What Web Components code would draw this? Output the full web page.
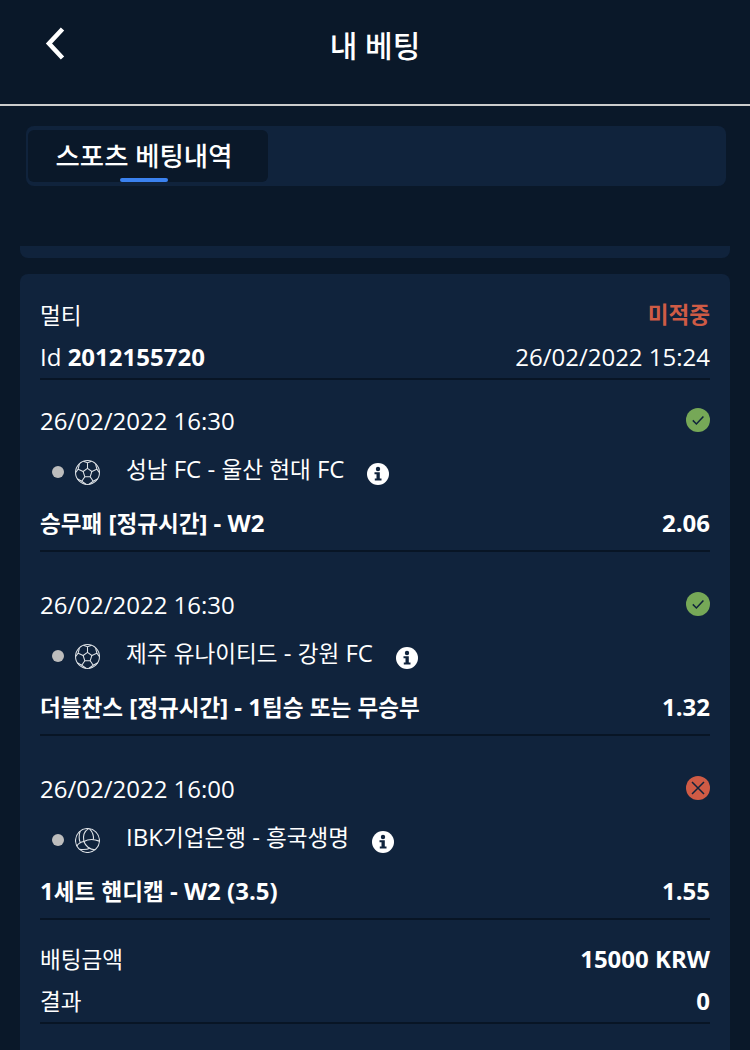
<!DOCTYPE html>
<html lang="ko">
<head>
<meta charset="utf-8">
<title>내 베팅</title>
<style>
  html, body { margin: 0; height: 100%; background: #0a1829; overflow: hidden; }
  body { font-family: "Open Sans", "Noto Sans CJK KR", sans-serif; color: #fff; font-size: 24px; }
</style>
</head>
<body>
<app-header>내 베팅</app-header>
<bet-tabs>스포츠 베팅내역</bet-tabs>
<div style="height:60px"></div>
<prev-card></prev-card>
<bet-card>
  <bet-event date="26/02/2022 16:30" status="win" sport="soccer" teams="성남 FC - 울산 현대 FC" market="승무패 [정규시간] - W2" odds="2.06"></bet-event>
  <bet-event date="26/02/2022 16:30" status="win" sport="soccer" teams="제주 유나이티드 - 강원 FC" market="더블찬스 [정규시간] - 1팀승 또는 무승부" odds="1.32"></bet-event>
  <bet-event date="26/02/2022 16:00" status="lose" sport="volley" teams="IBK기업은행 - 흥국생명" market="1세트 핸디캡 - W2 (3.5)" odds="1.55"></bet-event>
</bet-card>

<script>
// hangul runs are set smaller than the latin text, like in the app
const ko = s => s.replace(/[가-힣]+/g, m => `<span style="font-size:.94em">${m}</span>`);

// Header
class AppHeader extends HTMLElement {
  constructor() {
    super();
    this.attachShadow({ mode: 'open' });
    this.shadowRoot.innerHTML = `
      <style>
        :host { display: flex; justify-content: center; position: relative; height: 104px; border-bottom: 2px solid #ccc; }
        .title { font-size: 30px; font-weight: 500; line-height: 40px; padding-top: 26px; }
        svg { position: absolute; left: 44px; top: 27px; }
      </style>
      <svg width="22" height="33" viewBox="0 0 22 33" fill="none"><path d="M18.5 2 L5 16.5 L18.5 31" stroke="#fff" stroke-width="4.6"/></svg>
      <div class="title"><slot></slot></div>`;
  }
}

// Tabs
class BetTabs extends HTMLElement {
  constructor() {
    super();
    this.attachShadow({ mode: 'open' });
    this.shadowRoot.innerHTML = `
      <style>
        :host { display: block; margin: 20px 24px 0 26px; height: 60px; background: #10233c; border-radius: 8px; padding: 4px 2px; box-sizing: border-box; }
        .tab { position: relative; width: 240px; height: 52px; background: #0a1829; border-radius: 6px; text-align: center; font-size: 26.4px; font-weight: 500; line-height: 52px; padding-right: 8px; box-sizing: border-box; }
        .tab::after { content: ''; position: absolute; left: 92px; bottom: 0; width: 48px; height: 4px; background: #3b82f0; border-radius: 2px; }
      </style>
      <div class="tab"><slot></slot></div>`;
  }
}

// Sliver of the card above
class PrevCard extends HTMLElement {
  constructor() {
    super();
    this.attachShadow({ mode: 'open' });
    this.shadowRoot.innerHTML = `
      <style>
        :host { display: block; margin: 0 20px; height: 12px; background: #10233c; border-radius: 0 0 8px 8px; }
      </style>`;
  }
}

// Main card
class BetCard extends HTMLElement {
  constructor() {
    super();
    this.attachShadow({ mode: 'open' });
    this.shadowRoot.innerHTML = `
      <style>
        :host { display: block; margin: 16px 20px 0; background: #10233c; border-radius: 8px 8px 0 0; padding: 20px 20px 40px; }
        .row { display: flex; justify-content: space-between; align-items: center; height: 42px; line-height: 42px; }
        .lose { color: #cf5b45; font-weight: 700; font-family: "Noto Sans CJK KR", sans-serif; font-size: 22.6px; margin-bottom: 2px; }
        b { font-weight: 700; }
        .rule { border-bottom: 2px solid #081525; }
        .first { margin-top: 6px; }
      </style>
      <div class="row"><span>${ko('멀티')}</span><span class="lose">미적중</span></div>
      <div class="row rule"><span>Id <b>2012155720</b></span><span>26/02/2022 15:24</span></div>
      <slot></slot>
      <div class="row first"><span>${ko('배팅금액')}</span><b>15000 KRW</b></div>
      <div class="row rule"><span>${ko('결과')}</span><b>0</b></div>`;
  }
}

const STATUS_ICONS = {
  win: '<circle cx="12" cy="12" r="12" fill="#76a857"/><path d="M6.8 12.4 L10.4 16 L17.4 8.4" fill="none" stroke="#10233c" stroke-width="1.5"/>',
  lose: '<circle cx="12" cy="12" r="12" fill="#cf5b45"/><path d="M6 6 L18 18 M18 6 L6 18" fill="none" stroke="#10233c" stroke-width="1.5"/>'
};
const SPORT_ICONS = {
  soccer: '<g fill="none" stroke="#dfe3e7" stroke-width="1"><circle cx="12" cy="12" r="11.5"/><path d="M12 8 L16.2 11 L14.6 16 L9.4 16 L7.8 11 Z"/><path d="M12 8 V2.6 M8 1.3 L12 2.6 L16 1.3 M16.2 11 L21 8.8 L19.8 4 M21 8.8 L23.3 12 M14.6 16 L17.5 20.4 L21.8 18 M17.5 20.4 L13.5 23.3 M9.4 16 L6.5 20.4 L2.2 18 M6.5 20.4 L10.5 23.3 M7.8 11 L3 8.8 L4.2 4 M3 8.8 L.7 12"/></g>',
  volley: '<g fill="none" stroke="#dfe3e7" stroke-width="1.05"><circle cx="12" cy="12" r="11.5"/><path d="M13 .6 C9 3 7.5 8 8.5 13 C5.5 13.5 3.2 15 1.8 17.2"/><path d="M5 3 C3.6 7 3.8 11 5 13.8"/><path d="M8.5 13 C12 11 18 10.5 23.4 12.6"/><path d="M8.5 13 C10 17 14 21 19.6 20.8"/><path d="M14 .8 C17 4 18.2 7.5 17.6 11.2"/><path d="M4.5 20.5 C9 21 12 20.6 14.2 19.4"/></g>'
};

// One selection of the coupon
class BetEvent extends HTMLElement {
  connectedCallback() {
    const a = n => this.getAttribute(n);
    const root = this.attachShadow({ mode: 'open' });
    root.innerHTML = `
      <style>
        :host { display: block; height: 184px; }
        .line { display: flex; justify-content: space-between; align-items: center; }
        .date { height: 42px; padding-top: 19px; }
        .teams { display: flex; align-items: center; height: 44px; margin-top: 5px; padding-left: 12px; }
        .dot { width: 12px; height: 12px; border-radius: 50%; background: #bdbdbd; margin-right: 11px; margin-top: 8px; }
        .sport { margin-top: 8px; margin-right: 26px; display: block; }
        .info { margin-left: 23px; margin-top: 12px; display: block; }
        .market { margin-top: 14px; height: 38px; line-height: 38px; padding-bottom: 8px; font-weight: 700; border-bottom: 2px solid #081525; }
        .status { display: block; }
      </style>
      <div class="line date"><span>${a('date')}</span><svg class="status" width="24" height="24" viewBox="0 0 24 24">${STATUS_ICONS[a('status')]}</svg></div>
      <div class="teams">
        <span class="dot"></span>
        <svg class="sport" width="25" height="25" viewBox="0 0 24 24">${SPORT_ICONS[a('sport')]}</svg>
        <span>${ko(a('teams'))}</span>
        <svg class="info" width="22" height="22" viewBox="0 0 22 22"><circle cx="11" cy="11" r="11" fill="#fff"/><circle cx="11" cy="6" r="2.2" fill="#10233c"/><path d="M7.5 9.3 H12.8 V15.4 H14.5 V17.4 H7.8 V15.4 H9.5 V11.3 H7.5 Z" fill="#10233c"/></svg>
      </div>
      <div class="line market"><span>${ko(a('market'))}</span><span>${a('odds')}</span></div>`;
  }
}

customElements.define('app-header', AppHeader);
customElements.define('bet-tabs', BetTabs);
customElements.define('prev-card', PrevCard);
customElements.define('bet-card', BetCard);
customElements.define('bet-event', BetEvent);
</script>
</body>
</html>
